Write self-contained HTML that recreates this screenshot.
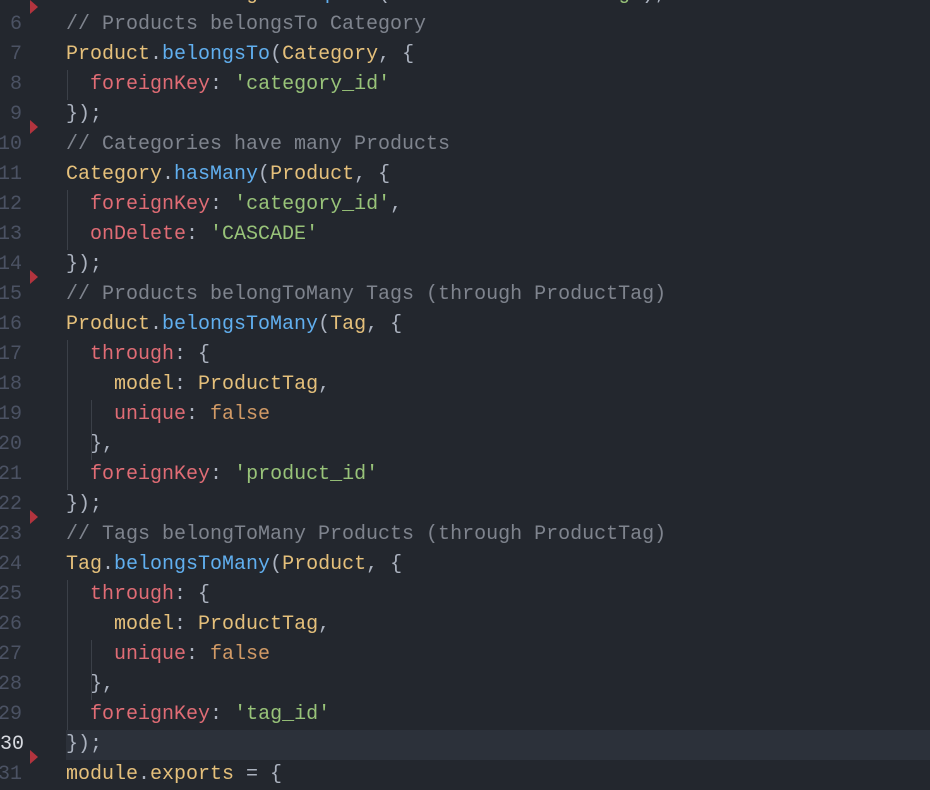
<!DOCTYPE html>
<html><head><style>
html,body{margin:0;padding:0;width:930px;height:768px;overflow:hidden;background:#23272e;}
.ed{position:absolute;left:0;top:-20px;width:930px;font-family:"Liberation Mono",monospace;font-size:20px;color:#abb2bf;}
.r{position:relative;height:30px;line-height:30px;white-space:pre;}
.n{position:absolute;right:908px;color:#4b5263;text-align:right;}
.t{position:absolute;left:66px;}
.hl{background:#2c313a;}
.hl .n{color:#d7dae0;}
.c{color:#7f848e}.y{color:#e5c07b}.b{color:#61afef}.rd{color:#e06c75}.g{color:#98c379}.o{color:#d19a66}.p{color:#c678dd}
.guide{position:absolute;width:1px;background:#3b4048;}
.tri{position:absolute;left:30px;width:0;height:0;border-top:7px solid transparent;border-bottom:7px solid transparent;border-left:8px solid #b3343e;}
</style></head><body>
<div class="ed">
<div class="r"><span class="n">5</span><span class="t"><span class="p">const</span> <span class="y">ProductTag</span> = <span class="b">require</span>(<span class="g">'./models/ProductTag'</span>);</span></div>
<div class="r"><span class="n">6</span><span class="t"><span class="c">// Products belongsTo Category</span></span></div>
<div class="r"><span class="n">7</span><span class="t"><span class="y">Product</span>.<span class="b">belongsTo</span>(<span class="y">Category</span>, {</span></div>
<div class="r"><span class="n">8</span><span class="t">  <span class="rd">foreignKey</span>: <span class="g">'category_id'</span></span></div>
<div class="r"><span class="n">9</span><span class="t">});</span></div>
<div class="r"><span class="n">10</span><span class="t"><span class="c">// Categories have many Products</span></span></div>
<div class="r"><span class="n">11</span><span class="t"><span class="y">Category</span>.<span class="b">hasMany</span>(<span class="y">Product</span>, {</span></div>
<div class="r"><span class="n">12</span><span class="t">  <span class="rd">foreignKey</span>: <span class="g">'category_id'</span>,</span></div>
<div class="r"><span class="n">13</span><span class="t">  <span class="rd">onDelete</span>: <span class="g">'CASCADE'</span></span></div>
<div class="r"><span class="n">14</span><span class="t">});</span></div>
<div class="r"><span class="n">15</span><span class="t"><span class="c">// Products belongToMany Tags (through ProductTag)</span></span></div>
<div class="r"><span class="n">16</span><span class="t"><span class="y">Product</span>.<span class="b">belongsToMany</span>(<span class="y">Tag</span>, {</span></div>
<div class="r"><span class="n">17</span><span class="t">  <span class="rd">through</span>: {</span></div>
<div class="r"><span class="n">18</span><span class="t">    <span class="y">model</span>: <span class="y">ProductTag</span>,</span></div>
<div class="r"><span class="n">19</span><span class="t">    <span class="rd">unique</span>: <span class="o">false</span></span></div>
<div class="r"><span class="n">20</span><span class="t">  },</span></div>
<div class="r"><span class="n">21</span><span class="t">  <span class="rd">foreignKey</span>: <span class="g">'product_id'</span></span></div>
<div class="r"><span class="n">22</span><span class="t">});</span></div>
<div class="r"><span class="n">23</span><span class="t"><span class="c">// Tags belongToMany Products (through ProductTag)</span></span></div>
<div class="r"><span class="n">24</span><span class="t"><span class="y">Tag</span>.<span class="b">belongsToMany</span>(<span class="y">Product</span>, {</span></div>
<div class="r"><span class="n">25</span><span class="t">  <span class="rd">through</span>: {</span></div>
<div class="r"><span class="n">26</span><span class="t">    <span class="y">model</span>: <span class="y">ProductTag</span>,</span></div>
<div class="r"><span class="n">27</span><span class="t">    <span class="rd">unique</span>: <span class="o">false</span></span></div>
<div class="r"><span class="n">28</span><span class="t">  },</span></div>
<div class="r"><span class="n">29</span><span class="t">  <span class="rd">foreignKey</span>: <span class="g">'tag_id'</span></span></div>
<div class="r hl" style="margin-left:66px"><span class="n" style="right:auto;left:-66px;width:24px">30</span><span class="t" style="left:0">});</span></div>
<div class="r"><span class="n">31</span><span class="t"><span class="y">module</span>.<span class="y">exports</span> = {</span></div>
</div>
<div class="guide" style="left:67px;top:70px;height:30px"></div>
<div class="guide" style="left:67px;top:190px;height:60px"></div>
<div class="guide" style="left:67px;top:340px;height:150px"></div>
<div class="guide" style="left:91px;top:400px;height:60px"></div>
<div class="guide" style="left:67px;top:580px;height:150px"></div>
<div class="guide" style="left:91px;top:640px;height:60px"></div>
<div class="tri" style="top:0px"></div>
<div class="tri" style="top:120px"></div>
<div class="tri" style="top:270px"></div>
<div class="tri" style="top:510px"></div>
<div class="tri" style="top:750px"></div>
</body></html>
